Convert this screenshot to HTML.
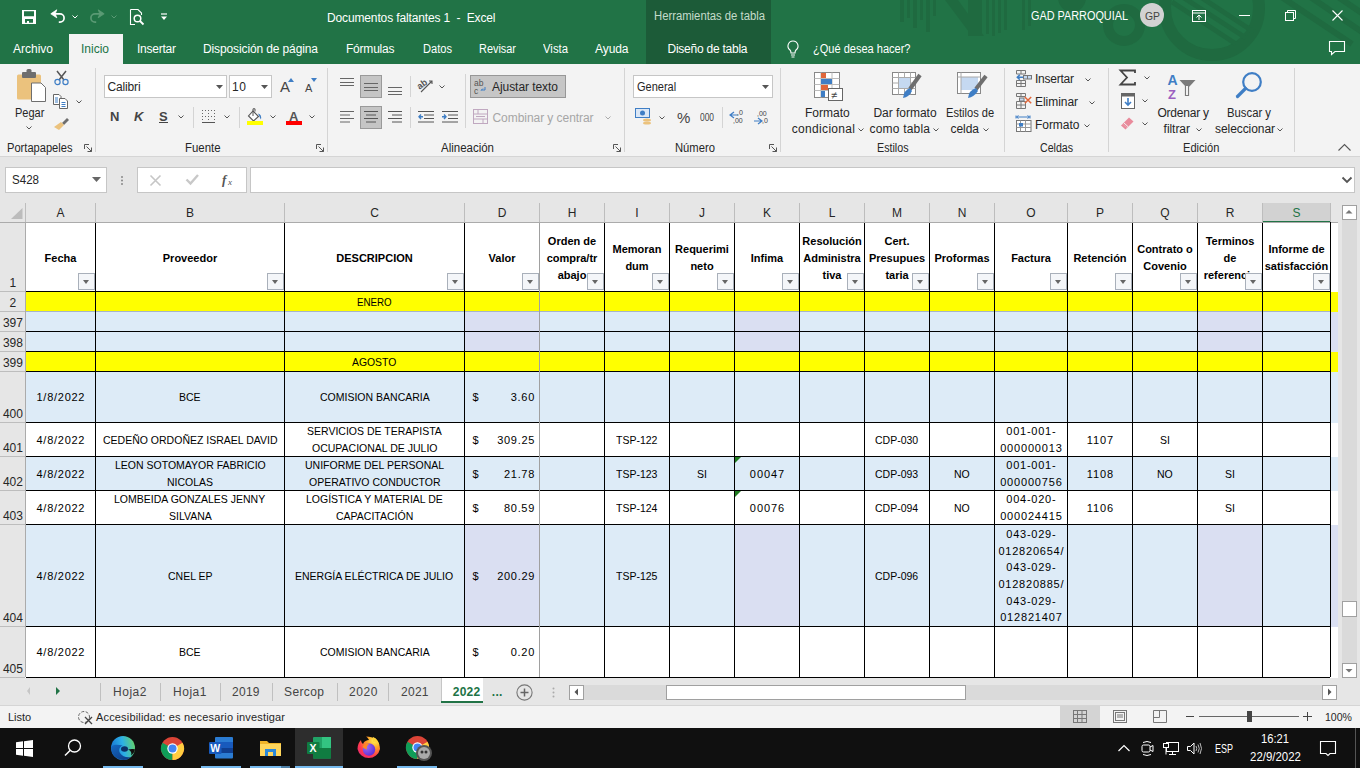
<!DOCTYPE html><html><head><meta charset="utf-8"><style>
html,body{margin:0;padding:0;width:1360px;height:768px;overflow:hidden;background:#fff;}
body{position:relative;font-family:"Liberation Sans",sans-serif;}
.a{position:absolute;}
svg.a{overflow:visible;}
.t{position:absolute;white-space:pre;}
.fb{position:absolute;width:17px;height:17px;box-sizing:border-box;border:1px solid #a9b0ba;background:#f4f6f9;}
.fb:after{content:"";position:absolute;left:4px;top:6px;border-left:3.5px solid transparent;border-right:3.5px solid transparent;border-top:4px solid #666;}
</style></head><body>
<div class="a" style="left:0px;top:0px;width:1360px;height:64px;background:#217346;"></div>
<div class="a" style="left:646px;top:0px;width:125px;height:64px;background:#1c5b38;"></div>
<svg class="a" style="left:0px;top:0px" width="1360" height="64" viewBox="0 0 1360 64"><g fill="#1f6a40">
<rect x="900" y="0" width="4" height="22"/><rect x="907" y="0" width="3" height="18"/><rect x="913" y="0" width="4" height="28"/><rect x="920" y="0" width="3" height="20"/><rect x="926" y="0" width="4" height="32"/><rect x="933" y="0" width="3" height="16"/>
<path d="M945 0H958L984 36H972Z"/>
<rect x="968" y="0" width="14" height="36"/><rect x="986" y="0" width="3" height="34"/><rect x="992" y="0" width="3" height="36"/><rect x="998" y="0" width="3" height="33"/><rect x="1004" y="0" width="3" height="30"/>
<rect x="1022" y="0" width="3" height="30"/><rect x="1028" y="0" width="3" height="26"/>
<circle cx="1072" cy="-2" r="14"/>
</g>
<g fill="none" stroke="#1f6a40">
<circle cx="1212" cy="8" r="47" stroke-width="12"/>
<circle cx="1124" cy="25" r="16" stroke-width="10"/>
<path d="M1172 2L1236 44M1184 -2L1246 38M1196 -6L1254 32" stroke-width="5"/>
<path d="M1292 0L1235 44M1312 0L1255 44M1332 0L1272 46M1352 0L1290 48" stroke-width="6" opacity="0"/>
<path d="M1280 -4L1352 44M1300 -10L1362 32M1322 -14L1372 20" stroke-width="6"/>
</g></svg>
<div class="t" style="left:327.00px;top:10.84px;font-size:12px;line-height:14px;color:#fff;letter-spacing:-0.137px;">Documentos faltantes 1  -  Excel</div>
<div class="t" style="left:654.00px;top:8.84px;font-size:12px;line-height:14px;color:#c4dccb;transform:scaleX(0.9401);transform-origin:0 0;">Herramientas de tabla</div>
<div class="t" style="left:1031.00px;top:8.84px;font-size:12px;line-height:14px;color:#fff;transform:scaleX(0.9054);transform-origin:0 0;">GAD PARROQUIAL</div>
<div class="a" style="left:1140px;top:3px;width:24px;height:24px;border-radius:50%;background:#d2d2d2"></div>
<div class="t" style="left:1144.50px;top:9.69px;font-size:11px;line-height:13px;color:#444;transform:scaleX(0.9438);transform-origin:0 0;">GP</div>
<div class="a" style="left:69px;top:34px;width:54px;height:30px;background:#f3f3f3;"></div>
<div class="t" style="left:13.00px;top:41.84px;font-size:12px;line-height:14px;color:#fff;">Archivo</div>
<div class="t" style="left:81.00px;top:41.84px;font-size:12px;line-height:14px;color:#217346;">Inicio</div>
<div class="t" style="left:137.00px;top:41.84px;font-size:12px;line-height:14px;color:#fff;letter-spacing:-0.241px;">Insertar</div>
<div class="t" style="left:203.00px;top:41.84px;font-size:12px;line-height:14px;color:#fff;letter-spacing:-0.121px;">Disposición de página</div>
<div class="t" style="left:346.00px;top:41.84px;font-size:12px;line-height:14px;color:#fff;letter-spacing:-0.216px;">Fórmulas</div>
<div class="t" style="left:422.50px;top:41.84px;font-size:12px;line-height:14px;color:#fff;transform:scaleX(0.9251);transform-origin:0 0;">Datos</div>
<div class="t" style="left:479.00px;top:41.84px;font-size:12px;line-height:14px;color:#fff;transform:scaleX(0.9096);transform-origin:0 0;">Revisar</div>
<div class="t" style="left:542.50px;top:41.84px;font-size:12px;line-height:14px;color:#fff;transform:scaleX(0.9447);transform-origin:0 0;">Vista</div>
<div class="t" style="left:595.00px;top:41.84px;font-size:12px;line-height:14px;color:#fff;letter-spacing:-0.078px;">Ayuda</div>
<div class="t" style="left:667.50px;top:41.84px;font-size:12px;line-height:14px;color:#fff;letter-spacing:-0.243px;">Diseño de tabla</div>
<div class="t" style="left:813.00px;top:41.84px;font-size:12px;line-height:14px;color:#fff;transform:scaleX(0.9192);transform-origin:0 0;">¿Qué desea hacer?</div>
<div class="a" style="left:0px;top:64px;width:1360px;height:92px;background:#f3f3f3;"></div>
<div class="a" style="left:0px;top:156px;width:1360px;height:1px;background:#d5d5d5;"></div>
<div class="a" style="left:95px;top:68px;width:1px;height:84px;background:#d4d4d4;"></div>
<div class="a" style="left:327px;top:68px;width:1px;height:84px;background:#d4d4d4;"></div>
<div class="a" style="left:624px;top:68px;width:1px;height:84px;background:#d4d4d4;"></div>
<div class="a" style="left:780px;top:68px;width:1px;height:84px;background:#d4d4d4;"></div>
<div class="a" style="left:1004px;top:68px;width:1px;height:84px;background:#d4d4d4;"></div>
<div class="a" style="left:1108px;top:68px;width:1px;height:84px;background:#d4d4d4;"></div>
<div class="a" style="left:1294px;top:68px;width:1px;height:84px;background:#d4d4d4;"></div>
<div class="t" style="left:6.50px;top:141.34px;font-size:12px;line-height:14px;color:#262626;transform:scaleX(0.9262);transform-origin:0 0;">Portapapeles</div>
<div class="t" style="left:185.00px;top:141.34px;font-size:12px;line-height:14px;color:#262626;transform:scaleX(0.9502);transform-origin:0 0;">Fuente</div>
<div class="t" style="left:441.00px;top:141.34px;font-size:12px;line-height:14px;color:#262626;transform:scaleX(0.9571);transform-origin:0 0;">Alineación</div>
<div class="t" style="left:674.50px;top:141.34px;font-size:12px;line-height:14px;color:#262626;transform:scaleX(0.9348);transform-origin:0 0;">Número</div>
<div class="t" style="left:876.50px;top:141.34px;font-size:12px;line-height:14px;color:#262626;transform:scaleX(0.8912);transform-origin:0 0;">Estilos</div>
<div class="t" style="left:1039.70px;top:141.34px;font-size:12px;line-height:14px;color:#262626;transform:scaleX(0.8861);transform-origin:0 0;">Celdas</div>
<div class="t" style="left:1182.60px;top:141.34px;font-size:12px;line-height:14px;color:#262626;transform:scaleX(0.9248);transform-origin:0 0;">Edición</div>
<div class="a" style="left:0px;top:157px;width:1360px;height:45px;background:#e6e6e6;"></div>
<div class="a" style="left:5px;top:167px;width:102px;height:26px;background:#fff;border:1px solid #c6c6c6;box-sizing:border-box;"></div>
<div class="t" style="left:12.00px;top:172.84px;font-size:12px;line-height:14px;color:#262626;transform:scaleX(0.9634);transform-origin:0 0;">S428</div>
<div class="a" style="left:137px;top:167px;width:110px;height:26px;background:#fff;border:1px solid #c6c6c6;box-sizing:border-box;"></div>
<div class="a" style="left:250px;top:167px;width:1105px;height:26px;background:#fff;border:1px solid #c6c6c6;box-sizing:border-box;"></div>
<div class="a" style="left:0px;top:202px;width:1338px;height:20px;background:#e6e6e6;"></div>
<div class="a" style="left:0px;top:222px;width:25px;height:455px;background:#e6e6e6;"></div>
<div class="a" style="left:1262px;top:203px;width:68px;height:19px;background:#d2d2d2;"></div>
<div class="a" style="left:1262px;top:221px;width:69px;height:2px;background:#217346;"></div>
<div class="t" style="left:56.50px;top:205.84px;font-size:12px;line-height:14px;color:#262626;">A</div>
<div class="t" style="left:186.00px;top:205.84px;font-size:12px;line-height:14px;color:#262626;">B</div>
<div class="t" style="left:370.17px;top:205.84px;font-size:12px;line-height:14px;color:#262626;">C</div>
<div class="t" style="left:497.67px;top:205.84px;font-size:12px;line-height:14px;color:#262626;">D</div>
<div class="t" style="left:567.67px;top:205.84px;font-size:12px;line-height:14px;color:#262626;">H</div>
<div class="t" style="left:635.33px;top:205.84px;font-size:12px;line-height:14px;color:#262626;">I</div>
<div class="t" style="left:699.00px;top:205.84px;font-size:12px;line-height:14px;color:#262626;">J</div>
<div class="t" style="left:763.00px;top:205.84px;font-size:12px;line-height:14px;color:#262626;">K</div>
<div class="t" style="left:828.66px;top:205.84px;font-size:12px;line-height:14px;color:#262626;">L</div>
<div class="t" style="left:892.00px;top:205.84px;font-size:12px;line-height:14px;color:#262626;">M</div>
<div class="t" style="left:957.67px;top:205.84px;font-size:12px;line-height:14px;color:#262626;">N</div>
<div class="t" style="left:1026.33px;top:205.84px;font-size:12px;line-height:14px;color:#262626;">O</div>
<div class="t" style="left:1096.00px;top:205.84px;font-size:12px;line-height:14px;color:#262626;">P</div>
<div class="t" style="left:1160.33px;top:205.84px;font-size:12px;line-height:14px;color:#262626;">Q</div>
<div class="t" style="left:1225.67px;top:205.84px;font-size:12px;line-height:14px;color:#262626;">R</div>
<div class="t" style="left:1292.50px;top:205.84px;font-size:12px;line-height:14px;color:#217346;">S</div>
<div class="a" style="left:25px;top:203px;width:1px;height:19px;background:#bdbdbd;"></div>
<div class="a" style="left:95px;top:203px;width:1px;height:19px;background:#bdbdbd;"></div>
<div class="a" style="left:284px;top:203px;width:1px;height:19px;background:#bdbdbd;"></div>
<div class="a" style="left:464px;top:203px;width:1px;height:19px;background:#bdbdbd;"></div>
<div class="a" style="left:539px;top:203px;width:1px;height:19px;background:#bdbdbd;"></div>
<div class="a" style="left:604px;top:203px;width:1px;height:19px;background:#bdbdbd;"></div>
<div class="a" style="left:669px;top:203px;width:1px;height:19px;background:#bdbdbd;"></div>
<div class="a" style="left:734px;top:203px;width:1px;height:19px;background:#bdbdbd;"></div>
<div class="a" style="left:799px;top:203px;width:1px;height:19px;background:#bdbdbd;"></div>
<div class="a" style="left:864px;top:203px;width:1px;height:19px;background:#bdbdbd;"></div>
<div class="a" style="left:929px;top:203px;width:1px;height:19px;background:#bdbdbd;"></div>
<div class="a" style="left:994px;top:203px;width:1px;height:19px;background:#bdbdbd;"></div>
<div class="a" style="left:1067px;top:203px;width:1px;height:19px;background:#bdbdbd;"></div>
<div class="a" style="left:1132px;top:203px;width:1px;height:19px;background:#bdbdbd;"></div>
<div class="a" style="left:1197px;top:203px;width:1px;height:19px;background:#bdbdbd;"></div>
<div class="a" style="left:1262px;top:203px;width:1px;height:19px;background:#bdbdbd;"></div>
<div class="a" style="left:1330px;top:203px;width:1px;height:19px;background:#bdbdbd;"></div>
<div class="a" style="left:0px;top:222px;width:1338px;height:1px;background:#ababab;"></div>
<div class="a" style="left:25px;top:222px;width:1px;height:455px;background:#ababab;"></div>
<div class="a" style="left:26px;top:223px;width:1312px;height:69px;background:#fff;"></div>
<div class="a" style="left:0px;top:291px;width:25px;height:1px;background:#bdbdbd;"></div>
<div class="t" style="left:9.56px;top:275.84px;font-size:12px;line-height:14px;color:#262626;">1</div>
<div class="a" style="left:26px;top:292px;width:1312px;height:20px;background:#ffff00;"></div>
<div class="a" style="left:0px;top:311px;width:25px;height:1px;background:#bdbdbd;"></div>
<div class="t" style="left:9.56px;top:295.84px;font-size:12px;line-height:14px;color:#262626;">2</div>
<div class="a" style="left:26px;top:312px;width:1312px;height:20px;background:#ddebf7;"></div>
<div class="a" style="left:464px;top:312px;width:75px;height:20px;background:#dadff2;"></div>
<div class="a" style="left:734px;top:312px;width:65px;height:20px;background:#dadff2;"></div>
<div class="a" style="left:1197px;top:312px;width:65px;height:20px;background:#dadff2;"></div>
<div class="a" style="left:1331px;top:312px;width:7px;height:20px;background:#dadff2;"></div>
<div class="a" style="left:0px;top:331px;width:25px;height:1px;background:#bdbdbd;"></div>
<div class="t" style="left:2.89px;top:315.84px;font-size:12px;line-height:14px;color:#262626;">397</div>
<div class="a" style="left:26px;top:332px;width:1312px;height:20px;background:#ddebf7;"></div>
<div class="a" style="left:464px;top:332px;width:75px;height:20px;background:#dadff2;"></div>
<div class="a" style="left:734px;top:332px;width:65px;height:20px;background:#dadff2;"></div>
<div class="a" style="left:1197px;top:332px;width:65px;height:20px;background:#dadff2;"></div>
<div class="a" style="left:1331px;top:332px;width:7px;height:20px;background:#dadff2;"></div>
<div class="a" style="left:0px;top:351px;width:25px;height:1px;background:#bdbdbd;"></div>
<div class="t" style="left:2.89px;top:335.84px;font-size:12px;line-height:14px;color:#262626;">398</div>
<div class="a" style="left:26px;top:352px;width:1312px;height:20px;background:#ffff00;"></div>
<div class="a" style="left:0px;top:371px;width:25px;height:1px;background:#bdbdbd;"></div>
<div class="t" style="left:2.89px;top:355.84px;font-size:12px;line-height:14px;color:#262626;">399</div>
<div class="a" style="left:26px;top:372px;width:1312px;height:51px;background:#ddebf7;"></div>
<div class="a" style="left:0px;top:422px;width:25px;height:1px;background:#bdbdbd;"></div>
<div class="t" style="left:2.89px;top:406.84px;font-size:12px;line-height:14px;color:#262626;">400</div>
<div class="a" style="left:26px;top:423px;width:1312px;height:34px;background:#fff;"></div>
<div class="a" style="left:0px;top:456px;width:25px;height:1px;background:#bdbdbd;"></div>
<div class="t" style="left:2.89px;top:440.84px;font-size:12px;line-height:14px;color:#262626;">401</div>
<div class="a" style="left:26px;top:457px;width:1312px;height:34px;background:#ddebf7;"></div>
<div class="a" style="left:0px;top:490px;width:25px;height:1px;background:#bdbdbd;"></div>
<div class="t" style="left:2.89px;top:474.84px;font-size:12px;line-height:14px;color:#262626;">402</div>
<div class="a" style="left:26px;top:491px;width:1312px;height:34px;background:#fff;"></div>
<div class="a" style="left:0px;top:524px;width:25px;height:1px;background:#bdbdbd;"></div>
<div class="t" style="left:2.89px;top:508.84px;font-size:12px;line-height:14px;color:#262626;">403</div>
<div class="a" style="left:26px;top:525px;width:1312px;height:102px;background:#ddebf7;"></div>
<div class="a" style="left:464px;top:525px;width:75px;height:102px;background:#dadff2;"></div>
<div class="a" style="left:734px;top:525px;width:65px;height:102px;background:#dadff2;"></div>
<div class="a" style="left:1197px;top:525px;width:65px;height:102px;background:#dadff2;"></div>
<div class="a" style="left:1331px;top:525px;width:7px;height:102px;background:#dadff2;"></div>
<div class="a" style="left:0px;top:626px;width:25px;height:1px;background:#bdbdbd;"></div>
<div class="t" style="left:2.89px;top:610.84px;font-size:12px;line-height:14px;color:#262626;">404</div>
<div class="a" style="left:26px;top:627px;width:1312px;height:51px;background:#fff;"></div>
<div class="a" style="left:0px;top:677px;width:25px;height:1px;background:#bdbdbd;"></div>
<div class="t" style="left:2.89px;top:661.84px;font-size:12px;line-height:14px;color:#262626;">405</div>
<div class="a" style="left:26px;top:291px;width:1304px;height:1px;background:#000;"></div>
<div class="a" style="left:26px;top:311px;width:1304px;height:1px;background:#a6b4c8;"></div>
<div class="a" style="left:26px;top:331px;width:1304px;height:1px;background:#000;"></div>
<div class="a" style="left:26px;top:351px;width:1304px;height:1px;background:#000;"></div>
<div class="a" style="left:26px;top:371px;width:1304px;height:1px;background:#000;"></div>
<div class="a" style="left:26px;top:422px;width:1304px;height:1px;background:#000;"></div>
<div class="a" style="left:26px;top:456px;width:1304px;height:1px;background:#000;"></div>
<div class="a" style="left:26px;top:490px;width:1304px;height:1px;background:#000;"></div>
<div class="a" style="left:26px;top:524px;width:1304px;height:1px;background:#000;"></div>
<div class="a" style="left:26px;top:626px;width:1304px;height:1px;background:#000;"></div>
<div class="a" style="left:26px;top:677px;width:1304px;height:1px;background:#000;"></div>
<div class="a" style="left:95px;top:223px;width:1px;height:454px;background:#000;"></div>
<div class="a" style="left:284px;top:223px;width:1px;height:454px;background:#000;"></div>
<div class="a" style="left:464px;top:223px;width:1px;height:454px;background:#000;"></div>
<div class="a" style="left:539px;top:223px;width:1px;height:454px;background:#a0a0a0;"></div>
<div class="a" style="left:604px;top:223px;width:1px;height:454px;background:#000;"></div>
<div class="a" style="left:669px;top:223px;width:1px;height:454px;background:#000;"></div>
<div class="a" style="left:734px;top:223px;width:1px;height:454px;background:#000;"></div>
<div class="a" style="left:799px;top:223px;width:1px;height:454px;background:#000;"></div>
<div class="a" style="left:864px;top:223px;width:1px;height:454px;background:#000;"></div>
<div class="a" style="left:929px;top:223px;width:1px;height:454px;background:#000;"></div>
<div class="a" style="left:994px;top:223px;width:1px;height:454px;background:#000;"></div>
<div class="a" style="left:1067px;top:223px;width:1px;height:454px;background:#000;"></div>
<div class="a" style="left:1132px;top:223px;width:1px;height:454px;background:#000;"></div>
<div class="a" style="left:1197px;top:223px;width:1px;height:454px;background:#000;"></div>
<div class="a" style="left:1262px;top:223px;width:1px;height:454px;background:#000;"></div>
<div class="a" style="left:1330px;top:223px;width:1px;height:454px;background:#000;"></div>
<div class="a" style="left:1330px;top:222px;width:1px;height:455px;background:#000;"></div>
<div class="a" style="left:1338px;top:222px;width:1px;height:455px;background:#a6a6a6;"></div>
<div class="t" style="left:44.60px;top:251.69px;font-size:11px;line-height:13px;color:#000;font-weight:bold;">Fecha</div>
<div class="t" style="left:162.79px;top:251.69px;font-size:11px;line-height:13px;color:#000;font-weight:bold;">Proveedor</div>
<div class="t" style="left:336.30px;top:251.69px;font-size:11px;line-height:13px;color:#000;font-weight:bold;">DESCRIPCION</div>
<div class="t" style="left:488.55px;top:251.69px;font-size:11px;line-height:13px;color:#000;font-weight:bold;">Valor</div>
<div class="t" style="left:547.86px;top:234.69px;font-size:11px;line-height:13px;color:#000;font-weight:bold;">Orden de</div>
<div class="t" style="left:546.63px;top:251.69px;font-size:11px;line-height:13px;color:#000;font-weight:bold;">compra/tr</div>
<div class="t" style="left:557.63px;top:268.69px;font-size:11px;line-height:13px;color:#000;font-weight:bold;">abajo</div>
<div class="t" style="left:612.55px;top:242.69px;font-size:11px;line-height:13px;color:#000;font-weight:bold;">Memoran</div>
<div class="t" style="left:625.39px;top:259.69px;font-size:11px;line-height:13px;color:#000;font-weight:bold;">dum</div>
<div class="t" style="left:675.10px;top:242.69px;font-size:11px;line-height:13px;color:#000;font-weight:bold;">Requerimi</div>
<div class="t" style="left:690.39px;top:259.69px;font-size:11px;line-height:13px;color:#000;font-weight:bold;">neto</div>
<div class="t" style="left:750.80px;top:251.69px;font-size:11px;line-height:13px;color:#000;font-weight:bold;">Infima</div>
<div class="t" style="left:802.36px;top:234.69px;font-size:11px;line-height:13px;color:#000;font-weight:bold;">Resolución</div>
<div class="t" style="left:803.27px;top:251.69px;font-size:11px;line-height:13px;color:#000;font-weight:bold;">Administra</div>
<div class="t" style="left:822.52px;top:268.69px;font-size:11px;line-height:13px;color:#000;font-weight:bold;">tiva</div>
<div class="t" style="left:884.47px;top:234.69px;font-size:11px;line-height:13px;color:#000;font-weight:bold;">Cert.</div>
<div class="t" style="left:868.88px;top:251.69px;font-size:11px;line-height:13px;color:#000;font-weight:bold;">Presupues</div>
<div class="t" style="left:885.38px;top:268.69px;font-size:11px;line-height:13px;color:#000;font-weight:bold;">taria</div>
<div class="t" style="left:934.49px;top:251.69px;font-size:11px;line-height:13px;color:#000;font-weight:bold;">Proformas</div>
<div class="t" style="left:1011.13px;top:251.69px;font-size:11px;line-height:13px;color:#000;font-weight:bold;">Factura</div>
<div class="t" style="left:1073.41px;top:251.69px;font-size:11px;line-height:13px;color:#000;font-weight:bold;">Retención</div>
<div class="t" style="left:1137.20px;top:242.69px;font-size:11px;line-height:13px;color:#000;font-weight:bold;">Contrato o</div>
<div class="t" style="left:1143.30px;top:259.69px;font-size:11px;line-height:13px;color:#000;font-weight:bold;">Covenio</div>
<div class="t" style="left:1205.65px;top:234.69px;font-size:11px;line-height:13px;color:#000;font-weight:bold;">Terminos</div>
<div class="t" style="left:1223.58px;top:251.69px;font-size:11px;line-height:13px;color:#000;font-weight:bold;">de</div>
<div class="t" style="left:1203.71px;top:268.69px;font-size:11px;line-height:13px;color:#000;font-weight:bold;">referencia</div>
<div class="t" style="left:1268.38px;top:242.69px;font-size:11px;line-height:13px;color:#000;font-weight:bold;">Informe de</div>
<div class="t" style="left:1264.71px;top:259.69px;font-size:11px;line-height:13px;color:#000;font-weight:bold;">satisfacción</div>
<div class="fb" style="left:78px;top:273px"></div>
<div class="fb" style="left:267px;top:273px"></div>
<div class="fb" style="left:447px;top:273px"></div>
<div class="fb" style="left:522px;top:273px"></div>
<div class="fb" style="left:587px;top:273px"></div>
<div class="fb" style="left:652px;top:273px"></div>
<div class="fb" style="left:717px;top:273px"></div>
<div class="fb" style="left:782px;top:273px"></div>
<div class="fb" style="left:847px;top:273px"></div>
<div class="fb" style="left:912px;top:273px"></div>
<div class="fb" style="left:977px;top:273px"></div>
<div class="fb" style="left:1050px;top:273px"></div>
<div class="fb" style="left:1115px;top:273px"></div>
<div class="fb" style="left:1180px;top:273px"></div>
<div class="fb" style="left:1245px;top:273px"></div>
<div class="fb" style="left:1313px;top:273px"></div>
<div class="t" style="left:356.60px;top:295.69px;font-size:11px;line-height:13px;color:#000;transform:scaleX(0.8845);transform-origin:0 0;">ENERO</div>
<div class="t" style="left:352.00px;top:355.69px;font-size:11px;line-height:13px;color:#000;transform:scaleX(0.9432);transform-origin:0 0;">AGOSTO</div>
<div class="t" style="left:36.52px;top:391.19px;font-size:11px;line-height:13px;color:#000;letter-spacing:0.734px;">1/8/2022</div>
<div class="t" style="left:179.20px;top:391.19px;font-size:11px;line-height:13px;color:#000;transform:scaleX(0.9550);transform-origin:0 0;">BCE</div>
<div class="t" style="left:319.63px;top:391.19px;font-size:11px;line-height:13px;color:#000;transform:scaleX(0.9550);transform-origin:0 0;">COMISION BANCARIA</div>
<div class="t" style="left:472.50px;top:391.19px;font-size:11px;line-height:13px;color:#000;">$</div>
<div class="t" style="left:510.75px;top:391.19px;font-size:11px;line-height:13px;color:#000;letter-spacing:0.714px;">3.60</div>
<div class="t" style="left:36.52px;top:433.69px;font-size:11px;line-height:13px;color:#000;letter-spacing:0.734px;">4/8/2022</div>
<div class="t" style="left:102.74px;top:433.69px;font-size:11px;line-height:13px;color:#000;transform:scaleX(0.9550);transform-origin:0 0;">CEDEÑO ORDOÑEZ ISRAEL DAVID</div>
<div class="t" style="left:307.07px;top:425.34px;font-size:11px;line-height:13px;color:#000;transform:scaleX(0.9550);transform-origin:0 0;">SERVICIOS DE TERAPISTA</div>
<div class="t" style="left:311.75px;top:442.04px;font-size:11px;line-height:13px;color:#000;transform:scaleX(0.9550);transform-origin:0 0;">OCUPACIONAL DE JULIO</div>
<div class="t" style="left:472.50px;top:433.69px;font-size:11px;line-height:13px;color:#000;">$</div>
<div class="t" style="left:497.29px;top:433.69px;font-size:11px;line-height:13px;color:#000;letter-spacing:0.673px;">309.25</div>
<div class="t" style="left:616.27px;top:433.69px;font-size:11px;line-height:13px;color:#000;transform:scaleX(0.9550);transform-origin:0 0;">TSP-122</div>
<div class="t" style="left:875.40px;top:433.69px;font-size:11px;line-height:13px;color:#000;transform:scaleX(0.9550);transform-origin:0 0;">CDP-030</div>
<div class="t" style="left:1006.34px;top:425.34px;font-size:11px;line-height:13px;color:#000;letter-spacing:0.755px;">001-001-</div>
<div class="t" style="left:1000.17px;top:442.04px;font-size:11px;line-height:13px;color:#000;letter-spacing:0.826px;">000000013</div>
<div class="t" style="left:1086.75px;top:433.69px;font-size:11px;line-height:13px;color:#000;letter-spacing:0.946px;">1107</div>
<div class="t" style="left:1160.04px;top:433.69px;font-size:11px;line-height:13px;color:#000;transform:scaleX(0.9550);transform-origin:0 0;">SI</div>
<div class="t" style="left:36.52px;top:467.69px;font-size:11px;line-height:13px;color:#000;letter-spacing:0.734px;">4/8/2022</div>
<div class="t" style="left:114.60px;top:459.34px;font-size:11px;line-height:13px;color:#000;transform:scaleX(0.9550);transform-origin:0 0;">LEON SOTOMAYOR FABRICIO</div>
<div class="t" style="left:166.94px;top:476.04px;font-size:11px;line-height:13px;color:#000;transform:scaleX(0.9550);transform-origin:0 0;">NICOLAS</div>
<div class="t" style="left:304.94px;top:459.34px;font-size:11px;line-height:13px;color:#000;transform:scaleX(0.9550);transform-origin:0 0;">UNIFORME DEL PERSONAL</div>
<div class="t" style="left:308.74px;top:476.04px;font-size:11px;line-height:13px;color:#000;transform:scaleX(0.9550);transform-origin:0 0;">OPERATIVO CONDUCTOR</div>
<div class="t" style="left:472.50px;top:467.69px;font-size:11px;line-height:13px;color:#000;">$</div>
<div class="t" style="left:504.02px;top:467.69px;font-size:11px;line-height:13px;color:#000;letter-spacing:0.688px;">21.78</div>
<div class="t" style="left:616.27px;top:467.69px;font-size:11px;line-height:13px;color:#000;transform:scaleX(0.9550);transform-origin:0 0;">TSP-123</div>
<div class="t" style="left:697.04px;top:467.69px;font-size:11px;line-height:13px;color:#000;transform:scaleX(0.9550);transform-origin:0 0;">SI</div>
<div class="t" style="left:749.87px;top:467.69px;font-size:11px;line-height:13px;color:#000;letter-spacing:0.918px;">00047</div>
<div class="t" style="left:875.40px;top:467.69px;font-size:11px;line-height:13px;color:#000;transform:scaleX(0.9550);transform-origin:0 0;">CDP-093</div>
<div class="t" style="left:954.12px;top:467.69px;font-size:11px;line-height:13px;color:#000;transform:scaleX(0.9550);transform-origin:0 0;">NO</div>
<div class="t" style="left:1006.34px;top:459.34px;font-size:11px;line-height:13px;color:#000;letter-spacing:0.755px;">001-001-</div>
<div class="t" style="left:1000.17px;top:476.04px;font-size:11px;line-height:13px;color:#000;letter-spacing:0.826px;">000000756</div>
<div class="t" style="left:1086.75px;top:467.69px;font-size:11px;line-height:13px;color:#000;letter-spacing:0.946px;">1108</div>
<div class="t" style="left:1157.12px;top:467.69px;font-size:11px;line-height:13px;color:#000;transform:scaleX(0.9550);transform-origin:0 0;">NO</div>
<div class="t" style="left:1225.04px;top:467.69px;font-size:11px;line-height:13px;color:#000;transform:scaleX(0.9550);transform-origin:0 0;">SI</div>
<div class="t" style="left:36.52px;top:501.69px;font-size:11px;line-height:13px;color:#000;letter-spacing:0.734px;">4/8/2022</div>
<div class="t" style="left:114.40px;top:493.34px;font-size:11px;line-height:13px;color:#000;transform:scaleX(0.9550);transform-origin:0 0;">LOMBEIDA GONZALES JENNY</div>
<div class="t" style="left:168.59px;top:510.04px;font-size:11px;line-height:13px;color:#000;transform:scaleX(0.9550);transform-origin:0 0;">SILVANA</div>
<div class="t" style="left:306.10px;top:493.34px;font-size:11px;line-height:13px;color:#000;transform:scaleX(0.9550);transform-origin:0 0;">LOGÍSTICA Y MATERIAL DE</div>
<div class="t" style="left:335.88px;top:510.04px;font-size:11px;line-height:13px;color:#000;transform:scaleX(0.9550);transform-origin:0 0;">CAPACITACIÓN</div>
<div class="t" style="left:472.50px;top:501.69px;font-size:11px;line-height:13px;color:#000;">$</div>
<div class="t" style="left:504.02px;top:501.69px;font-size:11px;line-height:13px;color:#000;letter-spacing:0.688px;">80.59</div>
<div class="t" style="left:616.27px;top:501.69px;font-size:11px;line-height:13px;color:#000;transform:scaleX(0.9550);transform-origin:0 0;">TSP-124</div>
<div class="t" style="left:749.87px;top:501.69px;font-size:11px;line-height:13px;color:#000;letter-spacing:0.918px;">00076</div>
<div class="t" style="left:875.40px;top:501.69px;font-size:11px;line-height:13px;color:#000;transform:scaleX(0.9550);transform-origin:0 0;">CDP-094</div>
<div class="t" style="left:954.12px;top:501.69px;font-size:11px;line-height:13px;color:#000;transform:scaleX(0.9550);transform-origin:0 0;">NO</div>
<div class="t" style="left:1006.34px;top:493.34px;font-size:11px;line-height:13px;color:#000;letter-spacing:0.755px;">004-020-</div>
<div class="t" style="left:1000.17px;top:510.04px;font-size:11px;line-height:13px;color:#000;letter-spacing:0.826px;">000024415</div>
<div class="t" style="left:1086.75px;top:501.69px;font-size:11px;line-height:13px;color:#000;letter-spacing:0.946px;">1106</div>
<div class="t" style="left:1225.04px;top:501.69px;font-size:11px;line-height:13px;color:#000;transform:scaleX(0.9550);transform-origin:0 0;">SI</div>
<div class="t" style="left:36.52px;top:569.69px;font-size:11px;line-height:13px;color:#000;letter-spacing:0.734px;">4/8/2022</div>
<div class="t" style="left:167.72px;top:569.69px;font-size:11px;line-height:13px;color:#000;transform:scaleX(0.9550);transform-origin:0 0;">CNEL EP</div>
<div class="t" style="left:295.40px;top:569.69px;font-size:11px;line-height:13px;color:#000;transform:scaleX(0.9550);transform-origin:0 0;">ENERGÍA ELÉCTRICA DE JULIO</div>
<div class="t" style="left:472.50px;top:569.69px;font-size:11px;line-height:13px;color:#000;">$</div>
<div class="t" style="left:497.29px;top:569.69px;font-size:11px;line-height:13px;color:#000;letter-spacing:0.673px;">200.29</div>
<div class="t" style="left:616.27px;top:569.69px;font-size:11px;line-height:13px;color:#000;transform:scaleX(0.9550);transform-origin:0 0;">TSP-125</div>
<div class="t" style="left:875.40px;top:569.69px;font-size:11px;line-height:13px;color:#000;transform:scaleX(0.9550);transform-origin:0 0;">CDP-096</div>
<div class="t" style="left:1006.34px;top:527.94px;font-size:11px;line-height:13px;color:#000;letter-spacing:0.755px;">043-029-</div>
<div class="t" style="left:998.45px;top:544.64px;font-size:11px;line-height:13px;color:#000;letter-spacing:0.775px;">012820654/</div>
<div class="t" style="left:1006.34px;top:561.34px;font-size:11px;line-height:13px;color:#000;letter-spacing:0.755px;">043-029-</div>
<div class="t" style="left:998.45px;top:578.04px;font-size:11px;line-height:13px;color:#000;letter-spacing:0.775px;">012820885/</div>
<div class="t" style="left:1006.34px;top:594.74px;font-size:11px;line-height:13px;color:#000;letter-spacing:0.755px;">043-029-</div>
<div class="t" style="left:1000.17px;top:611.44px;font-size:11px;line-height:13px;color:#000;letter-spacing:0.826px;">012821407</div>
<div class="t" style="left:36.52px;top:646.19px;font-size:11px;line-height:13px;color:#000;letter-spacing:0.734px;">4/8/2022</div>
<div class="t" style="left:179.20px;top:646.19px;font-size:11px;line-height:13px;color:#000;transform:scaleX(0.9550);transform-origin:0 0;">BCE</div>
<div class="t" style="left:319.63px;top:646.19px;font-size:11px;line-height:13px;color:#000;transform:scaleX(0.9550);transform-origin:0 0;">COMISION BANCARIA</div>
<div class="t" style="left:472.50px;top:646.19px;font-size:11px;line-height:13px;color:#000;">$</div>
<div class="t" style="left:510.75px;top:646.19px;font-size:11px;line-height:13px;color:#000;letter-spacing:0.714px;">0.20</div>
<svg class="a" style="left:735px;top:457px" width="6" height="6" viewBox="0 0 6 6"><path d="M0 0H6L0 6Z" fill="#1e7b1e"/></svg>
<svg class="a" style="left:735px;top:491px" width="6" height="6" viewBox="0 0 6 6"><path d="M0 0H6L0 6Z" fill="#1e7b1e"/></svg>
<div class="a" style="left:1338px;top:202px;width:22px;height:476px;background:#e6e6e6;"></div>
<div class="a" style="left:1342px;top:205px;width:15px;height:472px;background:#dadada;"></div>
<div class="a" style="left:1342px;top:205px;width:15px;height:15px;background:#fff;border:1px solid #a0a0a0;box-sizing:border-box;"></div>
<svg class="a" style="left:1342px;top:205px" width="15" height="15" viewBox="0 0 15 15"><path d="M3.5 8.5H10.5L7 5Z" fill="#777"/></svg>
<div class="a" style="left:1342px;top:601px;width:15px;height:16px;background:#fff;border:1px solid #a0a0a0;box-sizing:border-box;"></div>
<div class="a" style="left:1342px;top:663px;width:15px;height:15px;background:#fff;border:1px solid #a0a0a0;box-sizing:border-box;"></div>
<svg class="a" style="left:1342px;top:663px" width="15" height="15" viewBox="0 0 15 15"><path d="M3.5 6H10.5L7 9.5Z" fill="#777"/></svg>
<div class="a" style="left:0px;top:678px;width:1360px;height:28px;background:#e6e6e6;"></div>
<svg class="a" style="left:27px;top:687px" width="4" height="8" viewBox="0 0 4 8"><path d="M3 0V8L0 4Z" fill="#c6c6c6"/></svg>
<svg class="a" style="left:56px;top:687px" width="4" height="8" viewBox="0 0 4 8"><path d="M0 0V8L4 4Z" fill="#217346"/></svg>
<div class="a" style="left:100px;top:683px;width:1px;height:18px;background:#c0c0c0;"></div>
<div class="a" style="left:160px;top:683px;width:1px;height:18px;background:#c0c0c0;"></div>
<div class="a" style="left:220px;top:683px;width:1px;height:18px;background:#c0c0c0;"></div>
<div class="a" style="left:272px;top:683px;width:1px;height:18px;background:#c0c0c0;"></div>
<div class="a" style="left:337px;top:683px;width:1px;height:18px;background:#c0c0c0;"></div>
<div class="a" style="left:388px;top:683px;width:1px;height:18px;background:#c0c0c0;"></div>
<div class="t" style="left:113.00px;top:684.84px;font-size:12px;line-height:14px;color:#444;letter-spacing:0.536px;">Hoja2</div>
<div class="t" style="left:173.00px;top:684.84px;font-size:12px;line-height:14px;color:#444;letter-spacing:0.536px;">Hoja1</div>
<div class="t" style="left:232.00px;top:684.84px;font-size:12px;line-height:14px;color:#444;letter-spacing:0.268px;">2019</div>
<div class="t" style="left:284.00px;top:684.84px;font-size:12px;line-height:14px;color:#444;letter-spacing:0.395px;">Sercop</div>
<div class="t" style="left:349.00px;top:684.84px;font-size:12px;line-height:14px;color:#444;letter-spacing:0.601px;">2020</div>
<div class="t" style="left:401.00px;top:684.84px;font-size:12px;line-height:14px;color:#444;letter-spacing:0.268px;">2021</div>
<div class="a" style="left:441px;top:678px;width:42px;height:25px;background:#fff;"></div>
<div class="a" style="left:441px;top:678px;width:1px;height:25px;background:#c6c6c6;"></div>
<div class="a" style="left:441px;top:701px;width:42px;height:2px;background:#217346;"></div>
<div class="t" style="left:452.70px;top:684.84px;font-size:12px;line-height:14px;color:#217346;font-weight:bold;letter-spacing:0.268px;">2022</div>
<div class="t" style="left:491.80px;top:684.84px;font-size:12px;line-height:14px;color:#217346;font-weight:bold;letter-spacing:0.298px;">...</div>
<svg class="a" style="left:515.5px;top:683.5px" width="17" height="17" viewBox="0 0 17 17"><circle cx="8.5" cy="8.5" r="7.6" fill="none" stroke="#777" stroke-width="1.1"/><path d="M8.5 4.5V12.5M4.5 8.5H12.5" stroke="#666" stroke-width="1.5"/></svg>
<svg class="a" style="left:552px;top:687px" width="3" height="11" viewBox="0 0 3 11"><circle cx="1.5" cy="1.5" r="1" fill="#aaa"/><circle cx="1.5" cy="5.5" r="1" fill="#aaa"/><circle cx="1.5" cy="9.5" r="1" fill="#aaa"/></svg>
<div class="a" style="left:569px;top:685px;width:768px;height:15px;background:#dadada;"></div>
<div class="a" style="left:569px;top:685px;width:15px;height:15px;background:#fff;border:1px solid #a0a0a0;box-sizing:border-box;"></div>
<svg class="a" style="left:569px;top:685px" width="15" height="15" viewBox="0 0 15 15"><path d="M9 3.5V10.5L5.5 7Z" fill="#555"/></svg>
<div class="a" style="left:666px;top:685px;width:300px;height:15px;background:#fff;border:1px solid #a0a0a0;box-sizing:border-box;"></div>
<div class="a" style="left:1322px;top:685px;width:15px;height:15px;background:#fff;border:1px solid #a0a0a0;box-sizing:border-box;"></div>
<svg class="a" style="left:1322px;top:685px" width="15" height="15" viewBox="0 0 15 15"><path d="M6 3.5V10.5L9.5 7Z" fill="#555"/></svg>
<div class="a" style="left:0px;top:706px;width:1360px;height:22px;background:#f3f3f3;"></div>
<div class="a" style="left:0px;top:705px;width:1360px;height:1px;background:#d5d5d5;"></div>
<div class="t" style="left:8.00px;top:710.69px;font-size:11px;line-height:13px;color:#262626;letter-spacing:-0.059px;">Listo</div>
<div class="t" style="left:96.00px;top:710.69px;font-size:11px;line-height:13px;color:#262626;letter-spacing:0.167px;">Accesibilidad: es necesario investigar</div>
<div class="a" style="left:1060px;top:706px;width:40px;height:22px;background:#d4d4d4;"></div>
<div class="t" style="left:1325.00px;top:710.69px;font-size:11px;line-height:13px;color:#262626;transform:scaleX(0.9597);transform-origin:0 0;">100%</div>
<div class="a" style="left:1199px;top:716px;width:100px;height:1px;background:#666;"></div>
<div class="a" style="left:1247px;top:711px;width:5px;height:11px;background:#444;"></div>
<div class="a" style="left:1186px;top:716px;width:8px;height:1px;background:#444;"></div>
<div class="a" style="left:1303px;top:716px;width:9px;height:1px;background:#444;"></div>
<div class="a" style="left:1307px;top:712px;width:1px;height:9px;background:#444;"></div>
<div class="a" style="left:0px;top:728px;width:1360px;height:40px;background:#101010;"></div>
<div class="a" style="left:295px;top:728px;width:48px;height:40px;background:#2d2d2d;"></div>
<div class="t" style="left:1215.00px;top:741.84px;font-size:12px;line-height:14px;color:#fff;transform:scaleX(0.7496);transform-origin:0 0;">ESP</div>
<div class="t" style="left:1261.00px;top:731.84px;font-size:12px;line-height:14px;color:#fff;transform:scaleX(0.9324);transform-origin:0 0;">16:21</div>
<div class="t" style="left:1250.00px;top:749.84px;font-size:12px;line-height:14px;color:#fff;transform:scaleX(0.9553);transform-origin:0 0;">22/9/2022</div>
<div class="a" style="left:103px;top:766px;width:40px;height:2px;background:#76b9ed;"></div>
<div class="a" style="left:201px;top:766px;width:40px;height:2px;background:#76b9ed;"></div>
<div class="a" style="left:250px;top:766px;width:31px;height:2px;background:#76b9ed;"></div>
<div class="a" style="left:295px;top:766px;width:48px;height:2px;background:#76b9ed;"></div>
<div class="a" style="left:397px;top:766px;width:40px;height:2px;background:#76b9ed;"></div>
<div class="a" style="left:281px;top:766px;width:9px;height:2px;background:#4d7fa6;"></div>
<svg class="a" style="left:22px;top:10px" width="14" height="14" viewBox="0 0 14 14"><path fill-rule="evenodd" d="M0 0H14V14H0ZM2 1.3H12V6.3H2ZM3 9H11V12.8H7V11.1H5V12.8H3Z" fill="#fff"/></svg>
<svg class="a" style="left:50px;top:8px" width="16" height="16" viewBox="0 0 16 16"><path d="M0.8 5.8L6.8 1.8L5.2 5.8L6.8 9.8Z" fill="#fff" stroke="#fff" stroke-width="0.8" stroke-linejoin="round"/><path d="M5 5.9H10A4.1 4.1 0 0 1 10 14.1H8.8" fill="none" stroke="#fff" stroke-width="1.7"/></svg>
<svg class="a" style="left:72px;top:15px" width="6" height="4" viewBox="0 0 6 4"><path d="M0.5 0.5L3 3L5.5 0.5" fill="none" stroke="#fff" stroke-width="1"/></svg>
<svg class="a" style="left:89px;top:8px" width="16" height="16" viewBox="0 0 16 16"><path d="M15.2 5.8L9.2 1.8L10.8 5.8L9.2 9.8Z" fill="#5a9a74" stroke="#5a9a74" stroke-width="0.8" stroke-linejoin="round"/><path d="M11 5.9H6A4.1 4.1 0 0 0 6 14.1H7.2" fill="none" stroke="#5a9a74" stroke-width="1.7"/></svg>
<svg class="a" style="left:111px;top:15px" width="6" height="4" viewBox="0 0 6 4"><path d="M0.5 0.5L3 3L5.5 0.5" fill="none" stroke="#5a9a74" stroke-width="1"/></svg>
<svg class="a" style="left:130px;top:9px" width="15" height="17" viewBox="0 0 15 17"><path d="M0.5 0.5H8L11.5 4V6M0.5 0.5V15.5H5" fill="none" stroke="#fff" stroke-width="1.1"/><circle cx="7.5" cy="9.5" r="3.3" fill="none" stroke="#fff" stroke-width="1.5"/><path d="M10 12L13.5 15.5" stroke="#fff" stroke-width="1.8"/></svg>
<svg class="a" style="left:161px;top:13px" width="6" height="8" viewBox="0 0 6 8"><path d="M0 1H6" stroke="#fff" stroke-width="1.2"/><path d="M0 3.5H6L3 7Z" fill="#fff"/></svg>
<svg class="a" style="left:1192px;top:10px" width="14" height="12" viewBox="0 0 14 12"><rect x="0.5" y="0.5" width="13" height="11" fill="none" stroke="#fff"/><path d="M0.5 3H13.5" stroke="#fff"/><path d="M7 10V5M4.5 7.5L7 5L9.5 7.5" fill="none" stroke="#fff"/></svg>
<div class="a" style="left:1239px;top:15px;width:11px;height:1px;background:#fff;"></div>
<svg class="a" style="left:1285px;top:10px" width="11" height="11" viewBox="0 0 11 11"><rect x="0.5" y="2.5" width="8" height="8" fill="none" stroke="#fff"/><path d="M2.5 2.5V0.5H10.5V8.5H8.5" fill="none" stroke="#fff"/></svg>
<svg class="a" style="left:1332px;top:10px" width="11" height="11" viewBox="0 0 11 11"><path d="M0.5 0.5L10.5 10.5M10.5 0.5L0.5 10.5" stroke="#fff" stroke-width="1.1"/></svg>
<svg class="a" style="left:1329px;top:41px" width="16" height="15" viewBox="0 0 16 15"><path d="M0.5 0.5H15.5V10.5H6L2.5 13.5V10.5H0.5Z" fill="none" stroke="#fff" stroke-width="1.1"/></svg>
<svg class="a" style="left:787px;top:40px" width="12" height="18" viewBox="0 0 12 18"><path d="M6 1A5 5 0 0 0 3 10C4 11 4 12 4 13H8C8 12 8 11 9 10A5 5 0 0 0 6 1Z" fill="none" stroke="#fff" stroke-width="1.1"/><path d="M4 15H8M4.5 17H7.5" stroke="#fff"/></svg>
<svg class="a" style="left:17px;top:72px" width="30" height="31" viewBox="0 0 30 31"><rect x="0" y="2.5" width="24" height="25" rx="1.5" fill="#ebc27d"/>
<rect x="5" y="0" width="14" height="6" rx="1" fill="#6e6e6e"/><rect x="9.5" y="-3" width="5" height="4" rx="1.5" fill="#6e6e6e"/>
<path d="M14.5 11H24L28.5 15.5V29.5H14.5Z" fill="#fff" stroke="#6e6e6e" stroke-width="1"/></svg>
<div class="t" style="left:14.60px;top:106.34px;font-size:12px;line-height:14px;color:#262626;transform:scaleX(0.9181);transform-origin:0 0;">Pegar</div>
<svg class="a" style="left:26px;top:126px" width="6" height="4" viewBox="0 0 6 4"><path d="M0.5 0.5L3 3L5.5 0.5" fill="none" stroke="#555"/></svg>
<svg class="a" style="left:54px;top:70px" width="15" height="15" viewBox="0 0 15 15"><path d="M3 1L10 10M12 1L5 10" stroke="#555" stroke-width="1.5"/><circle cx="3.5" cy="12" r="2.6" fill="none" stroke="#3f7ec5" stroke-width="1.2"/><circle cx="11.5" cy="12" r="2.6" fill="none" stroke="#3f7ec5" stroke-width="1.2"/></svg>
<svg class="a" style="left:53px;top:94px" width="15" height="15" viewBox="0 0 15 15"><path d="M0.5 0.5H6L8 2.5V10.5H0.5Z" fill="#fff" stroke="#666"/><path d="M6.5 4.5H12L14.5 7V14.5H6.5Z" fill="#fff" stroke="#666"/><path d="M2 4H5M2 6H5M2 8H5M8.5 8.5H12.5M8.5 10.5H12.5M8.5 12.5H12.5" stroke="#3f7ec5"/></svg>
<svg class="a" style="left:76px;top:100px" width="6" height="4" viewBox="0 0 6 4"><path d="M0.5 0.5L3 3L5.5 0.5" fill="none" stroke="#555"/></svg>
<svg class="a" style="left:53px;top:116px" width="16" height="15" viewBox="0 0 16 15"><path d="M9 7L14 2L16 4L11 9Z" fill="#6e6e6e"/><path d="M1 11L8 6L11 9L6 14Z" fill="#ebc27d"/></svg>
<div class="a" style="left:104px;top:75px;width:123px;height:23px;background:#fff;border:1px solid #c6c6c6;box-sizing:border-box;"></div>
<div class="t" style="left:107.50px;top:79.84px;font-size:12px;line-height:14px;color:#262626;letter-spacing:-0.152px;">Calibri</div>
<svg class="a" style="left:216px;top:85px" width="7" height="4" viewBox="0 0 7 4"><path d="M0 0H7L3.5 4Z" fill="#555"/></svg>
<div class="a" style="left:229px;top:75px;width:43px;height:23px;background:#fff;border:1px solid #c6c6c6;box-sizing:border-box;"></div>
<div class="t" style="left:232.00px;top:79.84px;font-size:12px;line-height:14px;color:#262626;letter-spacing:0.652px;">10</div>
<svg class="a" style="left:261px;top:85px" width="7" height="4" viewBox="0 0 7 4"><path d="M0 0H7L3.5 4Z" fill="#555"/></svg>
<div class="t" style="left:280.00px;top:78.30px;font-size:15px;line-height:17px;color:#444;">A</div>
<svg class="a" style="left:288px;top:78px" width="6" height="4" viewBox="0 0 6 4"><path d="M0 4H6L3 0Z" fill="#3f7ec5"/></svg>
<div class="t" style="left:305.00px;top:81.69px;font-size:11px;line-height:13px;color:#444;">A</div>
<svg class="a" style="left:311px;top:78px" width="6" height="4" viewBox="0 0 6 4"><path d="M0 0H6L3 4Z" fill="#3f7ec5"/></svg>
<div class="t" style="left:110.00px;top:109.00px;font-size:13px;line-height:15px;color:#444;font-weight:bold;">N</div>
<div class="t" style="left:134.00px;top:109.00px;font-size:13px;line-height:15px;color:#444;font-weight:bold;font-style:italic;">K</div>
<div class="t" style="left:159.00px;top:109.00px;font-size:13px;line-height:15px;color:#444;font-weight:bold;">S</div>
<div class="a" style="left:159px;top:122px;width:9px;height:1px;background:#444;"></div>
<svg class="a" style="left:178px;top:115px" width="6" height="4" viewBox="0 0 6 4"><path d="M0.5 0.5L3 3L5.5 0.5" fill="none" stroke="#555"/></svg>
<div class="a" style="left:193px;top:107px;width:1px;height:21px;background:#d4d4d4;"></div>
<svg class="a" style="left:202px;top:110px" width="13" height="13" viewBox="0 0 13 13"><g fill="#666"><rect x="0" y="0" width="1" height="1"/><rect x="3" y="0" width="1" height="1"/><rect x="6" y="0" width="1" height="1"/><rect x="9" y="0" width="1" height="1"/><rect x="12" y="0" width="1" height="1"/><rect x="0" y="3" width="1" height="1"/><rect x="6" y="3" width="1" height="1"/><rect x="12" y="3" width="1" height="1"/><rect x="0" y="6" width="1" height="1"/><rect x="3" y="6" width="1" height="1"/><rect x="6" y="6" width="1" height="1"/><rect x="9" y="6" width="1" height="1"/><rect x="12" y="6" width="1" height="1"/><rect x="0" y="9" width="1" height="1"/><rect x="6" y="9" width="1" height="1"/><rect x="12" y="9" width="1" height="1"/></g><path d="M0 12.5H13" stroke="#555"/></svg>
<svg class="a" style="left:224px;top:115px" width="6" height="4" viewBox="0 0 6 4"><path d="M0.5 0.5L3 3L5.5 0.5" fill="none" stroke="#555"/></svg>
<div class="a" style="left:239px;top:107px;width:1px;height:21px;background:#d4d4d4;"></div>
<svg class="a" style="left:247px;top:108px" width="16" height="13" viewBox="0 0 16 13"><path d="M6 3L11.5 8.5L6.5 13L1.5 8Z" fill="#fff" stroke="#555" stroke-width="1.1"/><path d="M6 8V0.8H8V3.5" fill="none" stroke="#555"/><path d="M11 5.5Q15 6.5 14 11.5Q12.8 10 12.5 8.5Z" fill="#3f7ec5"/></svg>
<div class="a" style="left:247px;top:121px;width:16px;height:4px;background:#ffff00;"></div>
<svg class="a" style="left:270px;top:115px" width="6" height="4" viewBox="0 0 6 4"><path d="M0.5 0.5L3 3L5.5 0.5" fill="none" stroke="#555"/></svg>
<div class="t" style="left:289.00px;top:109.00px;font-size:13px;line-height:15px;color:#555;font-weight:bold;">A</div>
<div class="a" style="left:286px;top:121px;width:16px;height:4px;background:#ff0000;"></div>
<svg class="a" style="left:309px;top:115px" width="6" height="4" viewBox="0 0 6 4"><path d="M0.5 0.5L3 3L5.5 0.5" fill="none" stroke="#555"/></svg>
<svg class="a" style="left:84px;top:144px" width="8" height="8" viewBox="0 0 8 8"><path d="M0.5 5V0.5H5" fill="none" stroke="#555"/><path d="M2.5 2.5L7.5 7.5M7.5 3.5V7.5H3.5" fill="none" stroke="#555"/></svg>
<svg class="a" style="left:316px;top:144px" width="8" height="8" viewBox="0 0 8 8"><path d="M0.5 5V0.5H5" fill="none" stroke="#555"/><path d="M2.5 2.5L7.5 7.5M7.5 3.5V7.5H3.5" fill="none" stroke="#555"/></svg>
<svg class="a" style="left:613px;top:144px" width="8" height="8" viewBox="0 0 8 8"><path d="M0.5 5V0.5H5" fill="none" stroke="#555"/><path d="M2.5 2.5L7.5 7.5M7.5 3.5V7.5H3.5" fill="none" stroke="#555"/></svg>
<svg class="a" style="left:769px;top:144px" width="8" height="8" viewBox="0 0 8 8"><path d="M0.5 5V0.5H5" fill="none" stroke="#555"/><path d="M2.5 2.5L7.5 7.5M7.5 3.5V7.5H3.5" fill="none" stroke="#555"/></svg>
<svg class="a" style="left:340px;top:78px" width="14" height="10" viewBox="0 0 14 10"><path d="M0 0.5H14" stroke="#666"/><path d="M0 4.5H14" stroke="#666"/><path d="M0 7.5H14" stroke="#666"/></svg>
<div class="a" style="left:360px;top:75px;width:22px;height:23px;background:#c5c5c5;border:1px solid #9a9a9a;box-sizing:border-box;"></div>
<svg class="a" style="left:364px;top:83px" width="14" height="10" viewBox="0 0 14 10"><path d="M0 0.5H14" stroke="#666"/><path d="M0 4.5H14" stroke="#666"/><path d="M0 7.5H14" stroke="#666"/></svg>
<svg class="a" style="left:388px;top:87px" width="14" height="10" viewBox="0 0 14 10"><path d="M0 0.5H14" stroke="#666"/><path d="M0 4.5H14" stroke="#666"/><path d="M0 7.5H14" stroke="#666"/></svg>
<div class="a" style="left:410px;top:76px;width:1px;height:21px;background:#d4d4d4;"></div>
<svg class="a" style="left:418px;top:78px" width="17" height="16" viewBox="0 0 17 16"><text x="0" y="9" font-size="9" font-weight="bold" fill="#555" transform="rotate(-35 5 8)" font-family="Liberation Sans">ab</text><path d="M3 14L14 3M11 3H14V6" fill="none" stroke="#555" stroke-width="1.1"/></svg>
<svg class="a" style="left:439px;top:85px" width="6" height="4" viewBox="0 0 6 4"><path d="M0.5 0.5L3 3L5.5 0.5" fill="none" stroke="#555"/></svg>
<div class="a" style="left:465px;top:74px;width:1px;height:54px;background:#d4d4d4;"></div>
<div class="a" style="left:470px;top:75px;width:96px;height:23px;background:#c6c6c6;border:1px solid #979797;box-sizing:border-box;"></div>
<svg class="a" style="left:474px;top:79px" width="13" height="16" viewBox="0 0 13 16"><text x="0" y="7" font-size="8.5" fill="#555" font-family="Liberation Sans">ab</text><text x="0" y="15" font-size="8.5" fill="#555" font-family="Liberation Sans">c</text><path d="M7 11H11V8M9 9.5L7 11.5" fill="none" stroke="#3f7ec5"/></svg>
<div class="t" style="left:492.00px;top:79.84px;font-size:12px;line-height:14px;color:#262626;letter-spacing:-0.058px;">Ajustar texto</div>
<svg class="a" style="left:340px;top:111px" width="14" height="12" viewBox="0 0 14 12"><path d="M0 0.5H14M0 4H10M0 7.5H14M0 11H10" stroke="#666"/></svg>
<div class="a" style="left:360px;top:106px;width:22px;height:23px;background:#c5c5c5;border:1px solid #9a9a9a;box-sizing:border-box;"></div>
<svg class="a" style="left:364px;top:111px" width="14" height="12" viewBox="0 0 14 12"><path d="M0 0.5H14M2 4H12M0 7.5H14M2 11H12" stroke="#555"/></svg>
<svg class="a" style="left:388px;top:111px" width="14" height="12" viewBox="0 0 14 12"><path d="M0 0.5H14M4 4H14M0 7.5H14M4 11H14" stroke="#555"/></svg>
<div class="a" style="left:410px;top:107px;width:1px;height:21px;background:#d4d4d4;"></div>
<svg class="a" style="left:418px;top:111px" width="16" height="12" viewBox="0 0 16 12"><path d="M0 0.5H16M6 4H16M6 7.5H16M0 11H16" stroke="#555"/><path d="M5 5.75H1M3 3.5L1 5.75L3 8" fill="none" stroke="#3f7ec5" stroke-width="1.4"/></svg>
<svg class="a" style="left:442px;top:111px" width="16" height="12" viewBox="0 0 16 12"><path d="M0 0.5H16M6 4H16M6 7.5H16M0 11H16" stroke="#555"/><path d="M0 5.75H4M2 3.5L4 5.75L2 8" fill="none" stroke="#3f7ec5" stroke-width="1.4"/></svg>
<svg class="a" style="left:473px;top:109px" width="15" height="15" viewBox="0 0 15 15"><rect x="0.5" y="0.5" width="14" height="14" fill="none" stroke="#c0a8c0"/><path d="M0.5 5H14.5M0.5 10H14.5M5 0.5V5M10 10V14.5M3 7.5H12" stroke="#c0a8c0"/></svg>
<div class="t" style="left:492.50px;top:110.84px;font-size:12px;line-height:14px;color:#a6a6a6;letter-spacing:-0.055px;">Combinar y centrar</div>
<svg class="a" style="left:605px;top:116px" width="6" height="4" viewBox="0 0 6 4"><path d="M0.5 0.5L3 3L5.5 0.5" fill="none" stroke="#aaa"/></svg>
<div class="a" style="left:633px;top:75px;width:140px;height:23px;background:#fff;border:1px solid #c6c6c6;box-sizing:border-box;"></div>
<div class="t" style="left:636.80px;top:79.84px;font-size:12px;line-height:14px;color:#262626;transform:scaleX(0.9158);transform-origin:0 0;">General</div>
<svg class="a" style="left:762px;top:85px" width="7" height="4" viewBox="0 0 7 4"><path d="M0 0H7L3.5 4Z" fill="#555"/></svg>
<svg class="a" style="left:635px;top:108px" width="17" height="17" viewBox="0 0 17 17"><rect x="0.5" y="0.5" width="14" height="9" fill="#dbe7f6" stroke="#3f7ec5"/><circle cx="7.5" cy="5" r="2.5" fill="#3f7ec5"/><ellipse cx="12" cy="12" rx="4" ry="1.6" fill="#ebc27d"/><ellipse cx="12" cy="15" rx="4" ry="1.6" fill="#ebc27d"/></svg>
<svg class="a" style="left:659px;top:116px" width="6" height="4" viewBox="0 0 6 4"><path d="M0.5 0.5L3 3L5.5 0.5" fill="none" stroke="#555"/></svg>
<div class="t" style="left:677.00px;top:109.30px;font-size:15px;line-height:17px;color:#444;">%</div>
<div class="t" style="left:700.00px;top:111.53px;font-size:10px;line-height:12px;color:#444;transform:scaleX(0.8391);transform-origin:0 0;">000</div>
<div class="a" style="left:722px;top:107px;width:1px;height:21px;background:#d4d4d4;"></div>
<svg class="a" style="left:729px;top:109px" width="17" height="16" viewBox="0 0 17 16"><path d="M5 3L1 6L5 9M1 6H9" fill="none" stroke="#3f7ec5" stroke-width="1.2"/><text x="8" y="6" font-size="7" fill="#444" font-family="Liberation Sans">,0</text><text x="4" y="14" font-size="7" fill="#444" font-family="Liberation Sans">,00</text></svg>
<svg class="a" style="left:753px;top:109px" width="17" height="16" viewBox="0 0 17 16"><path d="M5 9L9 12L5 15M1 12H9" fill="none" stroke="#3f7ec5" stroke-width="1.2"/><text x="4" y="7" font-size="7" fill="#444" font-family="Liberation Sans">,00</text><text x="9" y="14" font-size="7" fill="#444" font-family="Liberation Sans">,0</text></svg>
<svg class="a" style="left:814px;top:72px" width="30" height="30" viewBox="0 0 30 30"><rect x="0.5" y="0.5" width="25" height="25" fill="#fff" stroke="#888"/>
<path d="M0.5 6.5H25.5M0.5 12.5H25.5M0.5 18.5H25.5M7 0.5V25.5M18 0.5V25.5" stroke="#bbb"/>
<rect x="7" y="1" width="5" height="5" fill="#e0663a"/><rect x="7" y="7" width="11" height="5" fill="#3f7ec5"/><rect x="7" y="13" width="7" height="5" fill="#e0663a"/><rect x="7" y="19" width="4" height="6" fill="#3f7ec5"/>
<rect x="14.5" y="16.5" width="14" height="12" fill="#fff" stroke="#666"/><text x="17" y="27" font-size="11" fill="#444" font-family="Liberation Sans">≠</text></svg>
<svg class="a" style="left:892px;top:72px" width="30" height="29" viewBox="0 0 30 29"><rect x="0.5" y="0.5" width="23" height="22" fill="#fff" stroke="#888"/>
<path d="M0.5 5.5H23.5M0.5 11H23.5M0.5 16.5H23.5M6.5 0.5V22.5M12.5 0.5V22.5M18.5 0.5V22.5" stroke="#aaa"/>
<rect x="7" y="6" width="11" height="10" fill="#c5d9f1"/>
<path d="M28 3L18 17" stroke="#6e6e6e" stroke-width="4"/><path d="M18 16Q12 18 11 26Q17 25 20 19Z" fill="#3f7ec5"/></svg>
<svg class="a" style="left:957px;top:72px" width="30" height="29" viewBox="0 0 30 29"><rect x="0.5" y="0.5" width="23" height="21" fill="#fff" stroke="#888"/>
<rect x="4" y="5" width="17" height="13" fill="#c5d9f1"/><path d="M0.5 5H23.5M4 0.5V21.5" stroke="#aaa"/>
<path d="M29 4L19 17" stroke="#6e6e6e" stroke-width="4"/><path d="M19 16Q12 18 11 26Q17 25 21 19Z" fill="#3f7ec5"/></svg>
<div class="t" style="left:805.00px;top:105.84px;font-size:12px;line-height:14px;color:#262626;">Formato</div>
<div class="t" style="left:791.80px;top:121.84px;font-size:12px;line-height:14px;color:#262626;letter-spacing:0.316px;">condicional</div>
<div class="t" style="left:873.40px;top:105.84px;font-size:12px;line-height:14px;color:#262626;letter-spacing:-0.015px;">Dar formato</div>
<div class="t" style="left:869.50px;top:121.84px;font-size:12px;line-height:14px;color:#262626;letter-spacing:0.200px;">como tabla</div>
<div class="t" style="left:945.50px;top:105.84px;font-size:12px;line-height:14px;color:#262626;transform:scaleX(0.9245);transform-origin:0 0;">Estilos de</div>
<div class="t" style="left:950.50px;top:121.84px;font-size:12px;line-height:14px;color:#262626;letter-spacing:-0.047px;">celda</div>
<svg class="a" style="left:858px;top:128px" width="6" height="4" viewBox="0 0 6 4"><path d="M0.5 0.5L3 3L5.5 0.5" fill="none" stroke="#555"/></svg>
<svg class="a" style="left:933px;top:128px" width="6" height="4" viewBox="0 0 6 4"><path d="M0.5 0.5L3 3L5.5 0.5" fill="none" stroke="#555"/></svg>
<svg class="a" style="left:983px;top:128px" width="6" height="4" viewBox="0 0 6 4"><path d="M0.5 0.5L3 3L5.5 0.5" fill="none" stroke="#555"/></svg>
<svg class="a" style="left:1015px;top:70px" width="17" height="17" viewBox="0 0 17 17"><path d="M1.5 0.5H10.5V4H1.5ZM6 0.5V4M1.5 10.5H10.5V16.5H1.5ZM1.5 13.5H10.5M6 10.5V16.5" fill="none" stroke="#777"/><rect x="8.5" y="5.5" width="8" height="3.5" fill="#c5d9f1" stroke="#777"/><path d="M12.5 5.5V9" stroke="#777"/><path d="M8 7.2H2.5M4.8 4.8L2.3 7.2L4.8 9.6" fill="none" stroke="#3f7ec5" stroke-width="1.5"/></svg>
<div class="t" style="left:1035.00px;top:71.84px;font-size:12px;line-height:14px;color:#262626;letter-spacing:-0.241px;">Insertar</div>
<svg class="a" style="left:1015px;top:93px" width="17" height="17" viewBox="0 0 17 17"><path d="M1.5 0.5H10.5V3.5H1.5ZM6 0.5V3.5M1.5 8.5H10.5V15.5H1.5ZM1.5 12H10.5M6 8.5V15.5" fill="none" stroke="#777"/><rect x="4.5" y="5" width="4.5" height="3" fill="#c5d9f1" stroke="#777"/><path d="M9.8 4L16.2 10.2M16.2 4L9.8 10.2" stroke="#e0663a" stroke-width="1.5"/></svg>
<div class="t" style="left:1035.00px;top:94.84px;font-size:12px;line-height:14px;color:#262626;letter-spacing:-0.049px;">Eliminar</div>
<svg class="a" style="left:1015px;top:115px" width="17" height="17" viewBox="0 0 17 17"><rect x="1.5" y="5.5" width="14.5" height="11" fill="#fff" stroke="#777"/><path d="M1.5 9H16M1.5 12.5H16M5.5 5.5V16.5M10.5 5.5V16.5" stroke="#999"/><rect x="4" y="8" width="4" height="3.5" fill="#3f7ec5"/><path d="M1.5 2H14.5M1 0.5V3.5M15 0.5V3.5M3.5 0.5L1.5 2L3.5 3.5M12.5 0.5L14.5 2L12.5 3.5" fill="none" stroke="#3f7ec5"/></svg>
<div class="t" style="left:1035.00px;top:117.84px;font-size:12px;line-height:14px;color:#262626;letter-spacing:-0.047px;">Formato</div>
<svg class="a" style="left:1085px;top:78px" width="6" height="4" viewBox="0 0 6 4"><path d="M0.5 0.5L3 3L5.5 0.5" fill="none" stroke="#555"/></svg>
<svg class="a" style="left:1089px;top:101px" width="6" height="4" viewBox="0 0 6 4"><path d="M0.5 0.5L3 3L5.5 0.5" fill="none" stroke="#555"/></svg>
<svg class="a" style="left:1084px;top:124px" width="6" height="4" viewBox="0 0 6 4"><path d="M0.5 0.5L3 3L5.5 0.5" fill="none" stroke="#555"/></svg>
<svg class="a" style="left:1120px;top:70px" width="16" height="16" viewBox="0 0 16 16"><path d="M15 3V0.5H0.5L7 7.5L0.5 14.5H15V12" fill="none" stroke="#444" stroke-width="1.8"/></svg>
<svg class="a" style="left:1121px;top:93px" width="14" height="16" viewBox="0 0 14 16"><rect x="0.5" y="0.5" width="13" height="15" fill="#fff" stroke="#666"/><rect x="0.5" y="0.5" width="13" height="3" fill="#666"/><path d="M7 5V12M4 9L7 12L10 9" fill="none" stroke="#3f7ec5" stroke-width="1.6"/></svg>
<svg class="a" style="left:1121px;top:117px" width="13" height="13" viewBox="0 0 13 13"><path d="M8 0.5L12.5 4.5L6 11L1.5 7Z" fill="#e98a9b"/><path d="M1.5 7L6 11L4.5 12.5L0 8.5Z" fill="#e98a9b"/><path d="M2.8 5.8L7.2 9.8" stroke="#f3f3f3" stroke-width="1"/></svg>
<svg class="a" style="left:1144px;top:76px" width="6" height="4" viewBox="0 0 6 4"><path d="M0.5 0.5L3 3L5.5 0.5" fill="none" stroke="#555"/></svg>
<svg class="a" style="left:1142px;top:99px" width="6" height="4" viewBox="0 0 6 4"><path d="M0.5 0.5L3 3L5.5 0.5" fill="none" stroke="#555"/></svg>
<svg class="a" style="left:1142px;top:122px" width="6" height="4" viewBox="0 0 6 4"><path d="M0.5 0.5L3 3L5.5 0.5" fill="none" stroke="#555"/></svg>
<svg class="a" style="left:1167px;top:73px" width="30" height="26" viewBox="0 0 30 26"><text x="0.5" y="12" font-size="14" font-weight="bold" fill="#3f7ec5" font-family="Liberation Sans">A</text><text x="1" y="26" font-size="13" font-weight="bold" fill="#9b5fc0" font-family="Liberation Sans">Z</text><path d="M12.5 7H28.5L22.5 13.5H18.5Z" fill="#7a7a7a"/><path d="M18.5 13V22.5H21.5V13" fill="#fff" stroke="#7a7a7a" stroke-width="1.2"/></svg>
<div class="t" style="left:1157.50px;top:105.84px;font-size:12px;line-height:14px;color:#262626;letter-spacing:-0.232px;">Ordenar y</div>
<div class="t" style="left:1163.60px;top:121.84px;font-size:12px;line-height:14px;color:#262626;letter-spacing:-0.045px;">filtrar</div>
<svg class="a" style="left:1196px;top:128px" width="6" height="4" viewBox="0 0 6 4"><path d="M0.5 0.5L3 3L5.5 0.5" fill="none" stroke="#555"/></svg>
<svg class="a" style="left:1235px;top:72px" width="28" height="27" viewBox="0 0 28 27"><circle cx="17" cy="10" r="8.8" fill="none" stroke="#3f7ec5" stroke-width="2.2"/><path d="M10.5 16.5L2.5 24.5" stroke="#3f7ec5" stroke-width="3.2" stroke-linecap="round"/></svg>
<div class="t" style="left:1227.00px;top:105.84px;font-size:12px;line-height:14px;color:#262626;transform:scaleX(0.9425);transform-origin:0 0;">Buscar y</div>
<div class="t" style="left:1215.00px;top:121.84px;font-size:12px;line-height:14px;color:#262626;letter-spacing:-0.070px;">seleccionar</div>
<svg class="a" style="left:1277px;top:128px" width="6" height="4" viewBox="0 0 6 4"><path d="M0.5 0.5L3 3L5.5 0.5" fill="none" stroke="#555"/></svg>
<svg class="a" style="left:1338px;top:144px" width="13" height="8" viewBox="0 0 13 8"><path d="M0.5 6.5L6.5 0.5L12.5 6.5" fill="none" stroke="#555" stroke-width="1.1"/></svg>
<svg class="a" style="left:92px;top:177px" width="9" height="5" viewBox="0 0 9 5"><path d="M0 0H9L4.5 5Z" fill="#666"/></svg>
<svg class="a" style="left:121px;top:176px" width="2" height="10" viewBox="0 0 2 10"><circle cx="1" cy="1" r="1" fill="#888"/><circle cx="1" cy="4.5" r="1" fill="#888"/><circle cx="1" cy="8" r="1" fill="#888"/></svg>
<svg class="a" style="left:150px;top:175px" width="11" height="11" viewBox="0 0 11 11"><path d="M0.5 0.5L10.5 10.5M10.5 0.5L0.5 10.5" stroke="#c6c6c6" stroke-width="1.6"/></svg>
<svg class="a" style="left:185.5px;top:174px" width="13" height="11" viewBox="0 0 13 11"><path d="M0.5 5.5L4.5 9.5L12 1" fill="none" stroke="#c8c8c8" stroke-width="2.4"/></svg>
<svg class="a" style="left:222px;top:173px" width="14" height="14" viewBox="0 0 14 14"><text x="0" y="11" font-size="13" font-style="italic" font-weight="bold" fill="#555" font-family="Liberation Serif">f</text><text x="6" y="12" font-size="9" font-style="italic" fill="#555" font-family="Liberation Serif">x</text></svg>
<svg class="a" style="left:1342px;top:177px" width="10" height="6" viewBox="0 0 10 6"><path d="M0.5 0.5L5 5L9.5 0.5" fill="none" stroke="#555" stroke-width="1.8"/></svg>
<svg class="a" style="left:10.5px;top:208px" width="12" height="11" viewBox="0 0 12 11"><path d="M11.5 0V11H0Z" fill="#bcbcbc"/></svg>
<svg class="a" style="left:77px;top:709px" width="16" height="16" viewBox="0 0 16 16"><circle cx="7" cy="8" r="5.5" fill="none" stroke="#666" stroke-dasharray="3 1.5"/><path d="M8 8L15 15M15 8L8 15" stroke="#444" stroke-width="1.3"/></svg>
<svg class="a" style="left:1073px;top:710px" width="14" height="13" viewBox="0 0 14 13"><rect x="0.5" y="0.5" width="13" height="12" fill="none" stroke="#777"/><path d="M0.5 4.5H13.5M0.5 8.5H13.5M4.5 0.5V12.5M9 0.5V12.5" stroke="#777"/></svg>
<svg class="a" style="left:1113px;top:710px" width="14" height="13" viewBox="0 0 14 13"><rect x="0.5" y="0.5" width="13" height="12" fill="none" stroke="#777"/><rect x="2.5" y="2.5" width="9" height="8" fill="none" stroke="#777"/><path d="M4 5H10M4 7H10" stroke="#777"/></svg>
<svg class="a" style="left:1153px;top:710px" width="14" height="13" viewBox="0 0 14 13"><path d="M0.5 12.5V0.5H13.5V12.5M0.5 7.5H6.5V0.5M13.5 12.5H0.5" fill="none" stroke="#777"/></svg>
<svg class="a" style="left:15.5px;top:739.5px" width="17" height="17" viewBox="0 0 17 17"><path d="M0 2.3L7 1.3V8H0ZM8 1.2L17 0V8H8ZM0 9H7V15.7L0 14.7ZM8 9H17V17L8 15.8Z" fill="#fff"/></svg>
<svg class="a" style="left:64px;top:739px" width="18" height="18" viewBox="0 0 18 18"><circle cx="10.5" cy="7" r="6" fill="none" stroke="#fff" stroke-width="1.3"/><path d="M6.3 11.2L1 16.5" stroke="#fff" stroke-width="1.5"/></svg>
<svg class="a" style="left:111px;top:736px" width="24" height="24" viewBox="0 0 24 24"><defs><linearGradient id="eg" x1="0" y1="0.5" x2="1" y2="0.3"><stop offset="0" stop-color="#1877d4"/><stop offset="0.5" stop-color="#2cb0e6"/><stop offset="1" stop-color="#63d26b"/></linearGradient>
<linearGradient id="eg2" x1="0" y1="0" x2="0.7" y2="1"><stop offset="0" stop-color="#1469c2"/><stop offset="1" stop-color="#0e3f8a"/></linearGradient></defs>
<circle cx="12" cy="12" r="12" fill="url(#eg)"/>
<path d="M17 13.5C20 12.5 24 13 24 13.5C23.5 16 22 18 20 19.5C21 17 20 14.5 17 13.5Z" fill="#101010"/>
<path d="M0.2 11C0 19 6 24 12.5 24C16 24 18.5 22.5 20 21C16 22 11 20.5 9 17C7 13.5 9 10 12 9.5C7 8.5 2 8 0.2 11Z" fill="url(#eg2)"/>
<ellipse cx="13.5" cy="13" rx="3.5" ry="2.8" fill="#0b2f66"/></svg>
<svg class="a" style="left:160.5px;top:736.5px" width="23" height="23" viewBox="0 0 23 23"><circle cx="11.5" cy="11.5" r="11.5" fill="#db4437"/><path d="M11.5 11.5L1.5 5.75A11.5 11.5 0 0 0 11.5 23Z" fill="#0f9d58"/><path d="M11.5 11.5L11.5 23A11.5 11.5 0 0 0 21.5 5.75Z" fill="#ffcd40"/>
<circle cx="11.5" cy="11.5" r="5.2" fill="#fff"/><circle cx="11.5" cy="11.5" r="4" fill="#4285f4"/></svg>
<svg class="a" style="left:209px;top:737px" width="24" height="22" viewBox="0 0 24 22"><rect x="6" y="0" width="18" height="21.5" rx="1" fill="#2b7cd3"/><rect x="6" y="5" width="18" height="6" fill="#185abd"/><rect x="6" y="11" width="18" height="5" fill="#103f91"/><rect x="0" y="5" width="12.5" height="12" rx="1" fill="#185abd"/><text x="1.2" y="15" font-size="10.5" font-weight="bold" fill="#fff" font-family="Liberation Sans">W</text></svg>
<svg class="a" style="left:259.5px;top:739px" width="22" height="18" viewBox="0 0 22 18"><path d="M0 2H7L9 4H21V17H0Z" fill="#f0b429"/><path d="M0 5H21V17H0Z" fill="#ffd65c"/><path d="M5 10H16V17H13V13H8V17H5Z" fill="#2b88d8"/></svg>
<svg class="a" style="left:307px;top:737px" width="24" height="22" viewBox="0 0 24 22"><rect x="6" y="0" width="18" height="21.5" rx="1" fill="#21a366"/><rect x="15" y="0" width="9" height="11" fill="#33c481"/><rect x="6" y="11" width="18" height="10.5" fill="#107c41"/><rect x="0" y="5" width="12.5" height="12" rx="1" fill="#107c41"/><text x="2.5" y="15" font-size="10.5" font-weight="bold" fill="#fff" font-family="Liberation Sans">X</text></svg>
<svg class="a" style="left:356.5px;top:735.5px" width="23" height="24" viewBox="0 0 23 24"><defs><radialGradient id="fg" cx="0.75" cy="0.2" r="1"><stop offset="0" stop-color="#fff44f"/><stop offset="0.35" stop-color="#ff9a25"/><stop offset="0.7" stop-color="#ff3750"/><stop offset="1" stop-color="#e3247b"/></radialGradient>
<radialGradient id="fp" cx="0.3" cy="0.3" r="0.8"><stop offset="0" stop-color="#a06cf0"/><stop offset="1" stop-color="#5b2bd6"/></radialGradient></defs>
<path d="M18 2C21 5 23 9 23 13A11.5 11.5 0 0 1 0.5 13C0.5 9 2 6 4 4C4 6 5 7 6 8C7 5 10 4 12 4C11 2 10 1 9 0.5C13 0.5 16 2 18 2Z" fill="url(#fg)"/>
<circle cx="12" cy="13.5" r="6.2" fill="url(#fp)"/>
<path d="M5.5 11C7 8 10 7 13 7.5C10 9 9 11 10 13.5C8 13 6.5 12 5.5 11Z" fill="#ff8a1f"/>
<path d="M16 1Q21 3 22.5 9Q19 5 16 6Z" fill="#ffd43a"/></svg>
<svg class="a" style="left:405.5px;top:735.5px" width="27" height="26" viewBox="0 0 27 26"><circle cx="11.5" cy="11.5" r="11.5" fill="#db4437"/><path d="M11.5 11.5L1.5 5.75A11.5 11.5 0 0 0 11.5 23Z" fill="#0f9d58"/><path d="M11.5 11.5L11.5 23A11.5 11.5 0 0 0 21.5 5.75Z" fill="#ffcd40"/>
<circle cx="11.5" cy="11.5" r="5.2" fill="#fff"/><circle cx="11.5" cy="11.5" r="4" fill="#4285f4"/><circle cx="18" cy="17" r="8" fill="#555"/><circle cx="18" cy="17" r="6" fill="#aaa"/><circle cx="16" cy="16" r="1.5" fill="#333"/><circle cx="20" cy="16" r="1.5" fill="#333"/></svg>
<svg class="a" style="left:1117.5px;top:744px" width="12" height="8" viewBox="0 0 12 8"><path d="M0.5 7L6 1.5L11.5 7" fill="none" stroke="#fff" stroke-width="1.2"/></svg>
<svg class="a" style="left:1141px;top:740.5px" width="13" height="15" viewBox="0 0 13 15"><rect x="1" y="4" width="8" height="7" rx="1.5" fill="none" stroke="#fff"/><path d="M9 6L12 4.5V10.5L9 9" fill="none" stroke="#fff"/><path d="M2 1.5Q6 -0.5 10 1.5M2 13.5Q6 15.5 10 13.5" fill="none" stroke="#fff"/></svg>
<svg class="a" style="left:1163px;top:741.5px" width="17" height="14" viewBox="0 0 17 14"><rect x="3.5" y="0.5" width="12" height="9" fill="none" stroke="#fff"/><path d="M9.5 9.5V12M6 12.5H13" stroke="#fff"/><rect x="0.5" y="1.5" width="5" height="4" fill="#111" stroke="#fff"/><path d="M3 5.5V12.5" stroke="#fff"/></svg>
<svg class="a" style="left:1187px;top:742px" width="16" height="13" viewBox="0 0 16 13"><path d="M0.5 4.5H3.5L7 1V12L3.5 8.5H0.5Z" fill="none" stroke="#fff"/><path d="M9 4Q10.5 6.5 9 9M11 2.5Q13.5 6.5 11 10.5M13 1Q16 6.5 13 12" fill="none" stroke="#bbb"/></svg>
<svg class="a" style="left:1319.5px;top:740.5px" width="16" height="16" viewBox="0 0 16 16"><path d="M0.5 0.5H15.5V12.5H10L8 14.5L6 12.5H0.5Z" fill="none" stroke="#fff" stroke-width="1.1"/></svg>
<div class="a" style="left:1355px;top:728px;width:1px;height:40px;background:#555;"></div>
</body></html>
